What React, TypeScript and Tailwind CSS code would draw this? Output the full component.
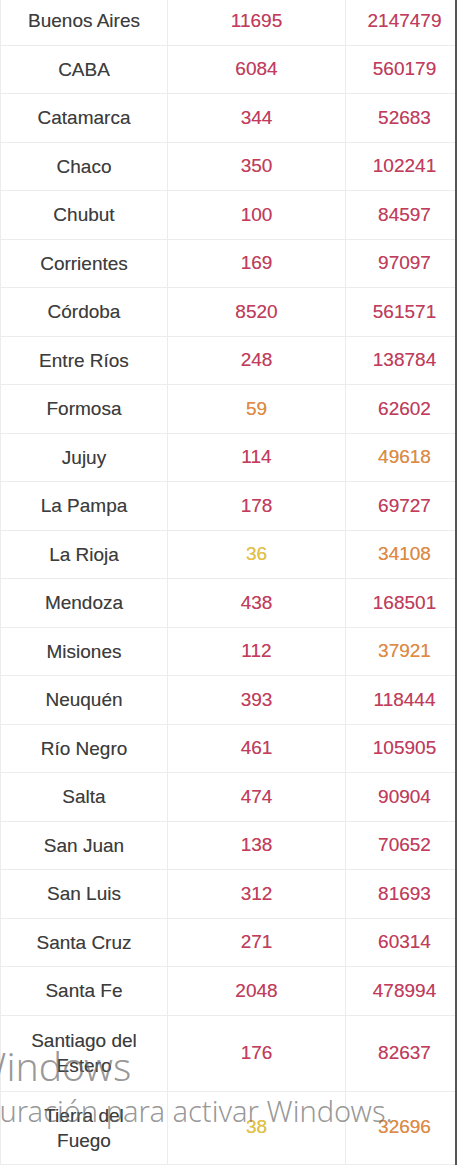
import React from 'react'

type Tone = 'red' | 'orange' | 'yellow'

type Row = {
  name: string[]
  cases: [string, Tone]
  tests: [string, Tone]
  height?: string
}

// provincias y valores tal como aparecen en la captura
const rows: Row[] = [
  { name: ['Buenos Aires'], cases: ['11695', 'red'], tests: ['2147479', 'red'] },
  { name: ['CABA'], cases: ['6084', 'red'], tests: ['560179', 'red'] },
  { name: ['Catamarca'], cases: ['344', 'red'], tests: ['52683', 'red'] },
  { name: ['Chaco'], cases: ['350', 'red'], tests: ['102241', 'red'] },
  { name: ['Chubut'], cases: ['100', 'red'], tests: ['84597', 'red'] },
  { name: ['Corrientes'], cases: ['169', 'red'], tests: ['97097', 'red'] },
  { name: ['Córdoba'], cases: ['8520', 'red'], tests: ['561571', 'red'] },
  { name: ['Entre Ríos'], cases: ['248', 'red'], tests: ['138784', 'red'] },
  { name: ['Formosa'], cases: ['59', 'orange'], tests: ['62602', 'red'] },
  { name: ['Jujuy'], cases: ['114', 'red'], tests: ['49618', 'orange'] },
  { name: ['La Pampa'], cases: ['178', 'red'], tests: ['69727', 'red'] },
  { name: ['La Rioja'], cases: ['36', 'yellow'], tests: ['34108', 'orange'] },
  { name: ['Mendoza'], cases: ['438', 'red'], tests: ['168501', 'red'] },
  { name: ['Misiones'], cases: ['112', 'red'], tests: ['37921', 'orange'] },
  { name: ['Neuquén'], cases: ['393', 'red'], tests: ['118444', 'red'] },
  { name: ['Río Negro'], cases: ['461', 'red'], tests: ['105905', 'red'] },
  { name: ['Salta'], cases: ['474', 'red'], tests: ['90904', 'red'] },
  { name: ['San Juan'], cases: ['138', 'red'], tests: ['70652', 'red'] },
  { name: ['San Luis'], cases: ['312', 'red'], tests: ['81693', 'red'] },
  { name: ['Santa Cruz'], cases: ['271', 'red'], tests: ['60314', 'red'] },
  { name: ['Santa Fe'], cases: ['2048', 'red'], tests: ['478994', 'red'] },
  { name: ['Santiago del', 'Estero'], cases: ['176', 'red'], tests: ['82637', 'red'], height: 'h-[76px]' },
  { name: ['Tierra del', 'Fuego'], cases: ['38', 'yellow'], tests: ['32696', 'orange'], height: 'h-[73px]' },
]

const toneClass: Record<Tone, string> = {
  red: 'text-[#c83a5c]',
  orange: 'text-[#e58a3c]',
  yellow: 'text-[#e9c43c]',
}

export default function App() {
  return (
    <div className="relative h-[1168px] w-[460px] overflow-hidden bg-white font-['Liberation_Sans',Arial,sans-serif]">
      <table className="-mt-[4px] w-[457px] table-fixed border-collapse border-r-[2px] border-r-[#555] text-[19px] [text-shadow:0_0_0.6px_rgba(0,0,0,0.35)]">
        <colgroup>
          <col className="w-[167px]" />
          <col className="w-[178px]" />
          <col />
        </colgroup>
        <tbody>
          {rows.map((row) => (
            <tr key={row.name.join(' ')} className={row.height ?? 'h-[48.5px]'}>
              <td className="border border-[#ececec] px-3 text-center leading-[25px] text-[#3d3d3d]">
                {row.name.map((line) => (
                  <div key={line}>{line}</div>
                ))}
              </td>
              <td className={`border border-[#ececec] text-center ${toneClass[row.cases[1]]}`}>
                {row.cases[0]}
              </td>
              <td className={`border border-[#ececec] pl-2 text-center ${toneClass[row.tests[1]]}`}>
                {row.tests[0]}
              </td>
            </tr>
          ))}
        </tbody>
      </table>

      {/* marca de agua de activación de Windows */}
      <div className="pointer-events-none absolute left-[-158px] top-[1042px] whitespace-nowrap font-['Noto_Sans','Open_Sans',sans-serif] font-light text-[#6b6b6b]/70">
        <div className="text-[39px] leading-[48px]">Activar Windows</div>
        <div className="ml-[9px] text-[29px] leading-[42px]">Ve a Configuración para activar Windows.</div>
      </div>
    </div>
  )
}
